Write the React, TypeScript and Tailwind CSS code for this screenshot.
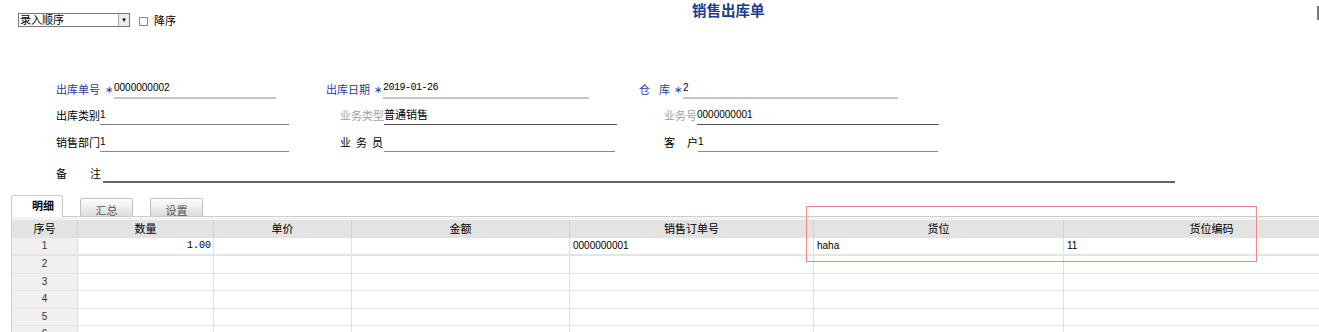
const font = "font-['Liberation_Sans','Noto_Sans_CJK_SC',sans-serif]";

const columns = [
  { title: "序号", w: "w-[65px]" },
  { title: "数量", w: "w-[136px]" },
  { title: "单价", w: "w-[138px]" },
  { title: "金额", w: "w-[218px]" },
  { title: "销售订单号", w: "w-[244px]" },
  { title: "货位", w: "w-[250px]" },
  { title: "货位编码", w: "w-[296px]" },
];

const rows = [
  ["1", "1.00", "", "", "0000000001", "haha", "11"],
  ["2", "", "", "", "", "", ""],
  ["3", "", "", "", "", "", ""],
  ["4", "", "", "", "", "", ""],
  ["5", "", "", "", "", "", ""],
  ["6", "", "", "", "", "", ""],
];

const App = () => {
  return (
    <div className={`relative w-[1319px] h-[332px] overflow-hidden bg-white text-[11px] text-black ${font}`}>
      {/* top bar */}
      <div className="flex h-[24px]">
        <div className="w-[692px] shrink-0 pl-[18px] pt-[13px] flex items-start">
          <div className="flex h-[14px] w-[112px] border border-[#7a7a7a] bg-white">
            <span className="flex-1 pl-[1px] leading-[12px]">录入顺序</span>
            <span className="flex w-[11px] items-center justify-center border-l border-[#aaa] bg-[#ececec] text-[6px] leading-none">
              ▼
            </span>
          </div>
          <span className="ml-[9px] mt-[4px] h-[9px] w-[9px] border border-[#888] bg-white" />
          <span className="ml-[6px] mt-[1px] leading-[14px]">降序</span>
        </div>
        <div className="pt-[3px] text-[14.5px] font-bold leading-[17px] text-[#1d3c8f]">销售出库单</div>
        <div className="flex-1" />
        <div className="mt-[6px] h-[14px] w-[2px] bg-[#7a7a7a]" />
      </div>

      {/* form */}
      <div className="mt-[55px]">
        <div className="flex h-[20px] items-end">
          <div className="flex w-[326px] shrink-0 items-end pl-[56px]">
            <span className="leading-[16px] pb-[1px] text-[#1f3aa0]">出库单号</span>
            <span className="ml-[5px] pb-[1px] text-[10px] leading-[16px] text-[#1f3aa0]">∗</span>
            <div className="ml-[1px] h-[17px] w-[162px] border-b-2 border-[#c4c4c4] text-[10px] leading-[11px]">0000000002</div>
          </div>
          <div className="flex w-[313px] shrink-0 items-end">
            <span className="leading-[16px] pb-[1px] text-[#1f3aa0]">出库日期</span>
            <span className="ml-[4px] pb-[1px] text-[10px] leading-[16px] text-[#1f3aa0]">∗</span>
            <div className="ml-[1px] h-[17px] w-[206px] border-b-2 border-[#c4c4c4] font-['Liberation_Mono',monospace] text-[10px] leading-[11px] tracking-[-0.5px]">2019-01-26</div>
          </div>
          <div className="flex items-end">
            <span className="leading-[16px] pb-[1px] text-[#1f3aa0]">仓</span>
            <span className="ml-[9px] leading-[16px] pb-[1px] text-[#1f3aa0]">库</span>
            <span className="ml-[4px] pb-[1px] text-[10px] leading-[16px] text-[#1f3aa0]">∗</span>
            <div className="ml-[1px] h-[17px] w-[215px] border-b-2 border-[#c4c4c4] text-[10px] leading-[11px]">2</div>
          </div>
        </div>

        <div className="flex h-[26px] items-end">
          <div className="flex w-[340px] shrink-0 items-end pl-[56px]">
            <span className="leading-[16px] pb-[1px]">出库类别</span>
            <div className="h-[16px] w-[189px] border-b border-[#7d7d7d] text-[10px] leading-[11px]">1</div>
          </div>
          <div className="flex w-[324px] shrink-0 items-end">
            <span className="leading-[16px] pb-[1px] text-[#a0a0a0]">业务类型</span>
            <div className="h-[16px] w-[233px] border-b border-[#555] leading-[12px]">普通销售</div>
          </div>
          <div className="flex items-end">
            <span className="leading-[16px] pb-[1px] text-[#a0a0a0]">业务号</span>
            <div className="h-[16px] w-[242px] border-b border-[#555] text-[10px] leading-[12px]">0000000001</div>
          </div>
        </div>

        <div className="flex h-[27px] items-end">
          <div className="flex w-[340px] shrink-0 items-end pl-[56px]">
            <span className="leading-[16px] pb-[1px]">销售部门</span>
            <div className="h-[16px] w-[189px] border-b border-[#8a8a8a] text-[10px] leading-[12px]">1</div>
          </div>
          <div className="flex w-[324px] shrink-0 items-end">
            <span className="leading-[16px] pb-[1px]">业</span>
            <span className="ml-[5px] leading-[16px] pb-[1px]">务</span>
            <span className="ml-[5px] leading-[16px] pb-[1px]">员</span>
            <div className="ml-[1px] h-[16px] w-[231px] border-b border-[#8a8a8a]" />
          </div>
          <div className="flex items-end">
            <span className="leading-[16px] pb-[1px]">客</span>
            <span className="ml-[12px] leading-[16px] pb-[1px]">户</span>
            <div className="h-[16px] w-[240px] border-b border-[#8a8a8a] text-[10px] leading-[12px]">1</div>
          </div>
        </div>

        <div className="flex h-[31px] items-end pl-[56px]">
          <span className="leading-[16px] pb-[1px]">备</span>
          <span className="ml-[23px] leading-[16px] pb-[1px]">注</span>
          <div className="ml-[2px] h-[16px] w-[1072px] border-b-2 border-[#666]" />
        </div>
      </div>

      {/* tabs */}
      <div className="mt-[11px] flex h-[22px] items-end pl-[11px]">
        <div className="relative z-10 -mb-px flex h-[22px] w-[52px] items-center rounded-t-[3px] border border-b-0 border-[#c8c8c8] bg-white pl-[20px] font-bold">
          明细
        </div>
        <div className="ml-[17px] flex h-[18px] w-[53px] justify-center overflow-hidden rounded-t-[2px] border border-b-0 border-[#c0c0c0] bg-gradient-to-b from-white to-[#dcdcdc] pt-[6px] text-[#555] leading-[12px]">
          汇总
        </div>
        <div className="ml-[17px] flex h-[18px] w-[53px] justify-center overflow-hidden rounded-t-[2px] border border-b-0 border-[#c0c0c0] bg-gradient-to-b from-white to-[#dcdcdc] pt-[6px] text-[#555] leading-[12px]">
          设置
        </div>
      </div>

      {/* grid */}
      <div className="ml-[11px] border-l border-t border-[#cfcfcf] pt-[3px] bg-[#f2f2f2]">
        <div className="flex h-[18px] bg-[#e3e3e3]">
          {columns.map((c, i) => (
            <div
              key={c.title}
              className={`${c.w} shrink-0 text-center leading-[18px] ${i > 0 ? "border-l border-[#d2d2d2]" : ""}`}
            >
              {c.title}
            </div>
          ))}
        </div>
        <div className="bg-white">
          {rows.map((r, ri) => (
            <div key={ri} className={`flex ${ri === 0 ? "h-[18px] border-b-2" : "h-[17.5px] border-b"} border-[#e4e4e4]`}>
              {r.map((v, ci) => (
                <div
                  key={ci}
                  className={`${columns[ci].w} shrink-0 overflow-hidden whitespace-nowrap leading-[16px] ${
                    ci > 0 ? "border-l border-[#e0e0e0]" : "bg-[#f0f0f0] text-center text-[10px] text-[#333]"
                  } ${ci === 1 ? "pr-[2px] text-right font-['Liberation_Mono',monospace] text-[10px]" : ""} ${
                    ci >= 4 ? "pl-[3px] text-[10px]" : ""
                  }`}
                >
                  {v}
                </div>
              ))}
            </div>
          ))}
        </div>
      </div>

      {/* annotation box */}
      <div className="absolute left-[806px] top-[206px] h-[56px] w-[451px] border border-[#f08a8a]" />
    </div>
  );
};

export default App;
